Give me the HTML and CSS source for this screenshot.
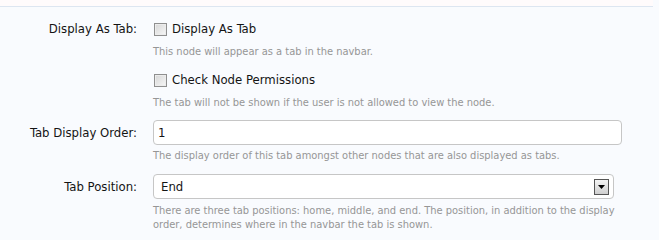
FILE: index.html
```html
<!DOCTYPE html>
<html>
<head>
<meta charset="utf-8">
<link rel="stylesheet" href="styles.css">
</head>
<body>
<div class="topbar"></div>
<div class="form">
  <div class="row">
    <div class="label">Display As Tab:</div>
    <div class="control">
      <div class="check"><span class="box"></span><span>Display As Tab</span></div>
      <p class="hint hint-check">This node will appear as a tab in the navbar.</p>
      <div class="check"><span class="box"></span><span>Check Node Permissions</span></div>
      <p class="hint hint-check hint-last">The tab will not be shown if the user is not allowed to view the node.</p>
    </div>
  </div>
  <div class="row">
    <div class="label lbl-input">Tab Display Order:</div>
    <div class="control">
      <input class="textbox" type="text" value="1">
      <p class="hint hint-input">The display order of this tab amongst other nodes that are also displayed as tabs.</p>
    </div>
  </div>
  <div class="row">
    <div class="label lbl-input">Tab Position:</div>
    <div class="control">
      <div class="select"><span>End</span><span class="arrow"><svg width="7" height="4" viewBox="0 0 7 4"><path d="M0 0H7L3.5 4Z" fill="#000"/></svg></span></div>
      <p class="hint hint-select">There are three tab positions: home, middle, and end. The position, in addition to the display order, determines where in the navbar the tab is shown.</p>
    </div>
  </div>
</div>
</body>
</html>
```
FILE: styles.css
```css
html, body {
  margin: 0;
  padding: 0;
}
body {
  background: #f9fbfe;
  font-family: "DejaVu Sans Condensed", "DejaVu Sans", sans-serif;
  color: #141414;
  width: 659px;
  height: 232px;
  overflow: hidden;
}
.topbar {
  height: 6px;
  width: 653px;
  background: #fffbfc;
  border-bottom: 1px solid #dde6f1;
}
.form {
  padding-top: 13px;
}
.row {
  display: flex;
}
.label {
  width: 137px;
  text-align: right;
  font-size: 13px;
  line-height: 18px;
  padding-right: 16px;
  flex-shrink: 0;
}
.lbl-input {
  padding-top: 4px;
}
.control {
  width: 470px;
}
.check {
  display: flex;
  align-items: center;
  font-size: 13px;
  line-height: 18px;
  gap: 5px;
  margin-left: 1px;
}
.box {
  width: 11px;
  height: 11px;
  border: 1px solid #8f8f8f;
  background: linear-gradient(135deg, #d6d6d6, #f7f7f7);
  box-shadow: inset 0 0 0 1px #ececec;
}
.hint {
  margin: 0;
  font-size: 11px;
  line-height: 14px;
  color: #969696;
}
.hint-check {
  margin: 7px 0 12px;
}
.hint-last {
  margin-bottom: 10px;
}
.hint-input {
  margin: 4px 0 11px;
}
.hint-select {
  margin: 5px 0 0;
}
.textbox {
  display: block;
  box-sizing: border-box;
  width: 469px;
  height: 25px;
  margin: 0;
  padding: 0 4px;
  border: 1px solid #c6c6c6;
  border-radius: 4px;
  background: #fff;
  font-family: inherit;
  font-size: 13px;
  color: #141414;
  outline: none;
}
.select {
  box-sizing: border-box;
  width: 461px;
  height: 25px;
  display: flex;
  align-items: center;
  justify-content: space-between;
  padding: 0 4px 0 7px;
  border: 1px solid #c6c6c6;
  border-radius: 4px;
  background: #fff;
  font-size: 13px;
}
.arrow {
  box-sizing: border-box;
  width: 15px;
  height: 16px;
  border: 1px solid #555;
  background: linear-gradient(#f4f4f4, #cfcfcf);
  display: flex;
  align-items: center;
  justify-content: center;
}
```
